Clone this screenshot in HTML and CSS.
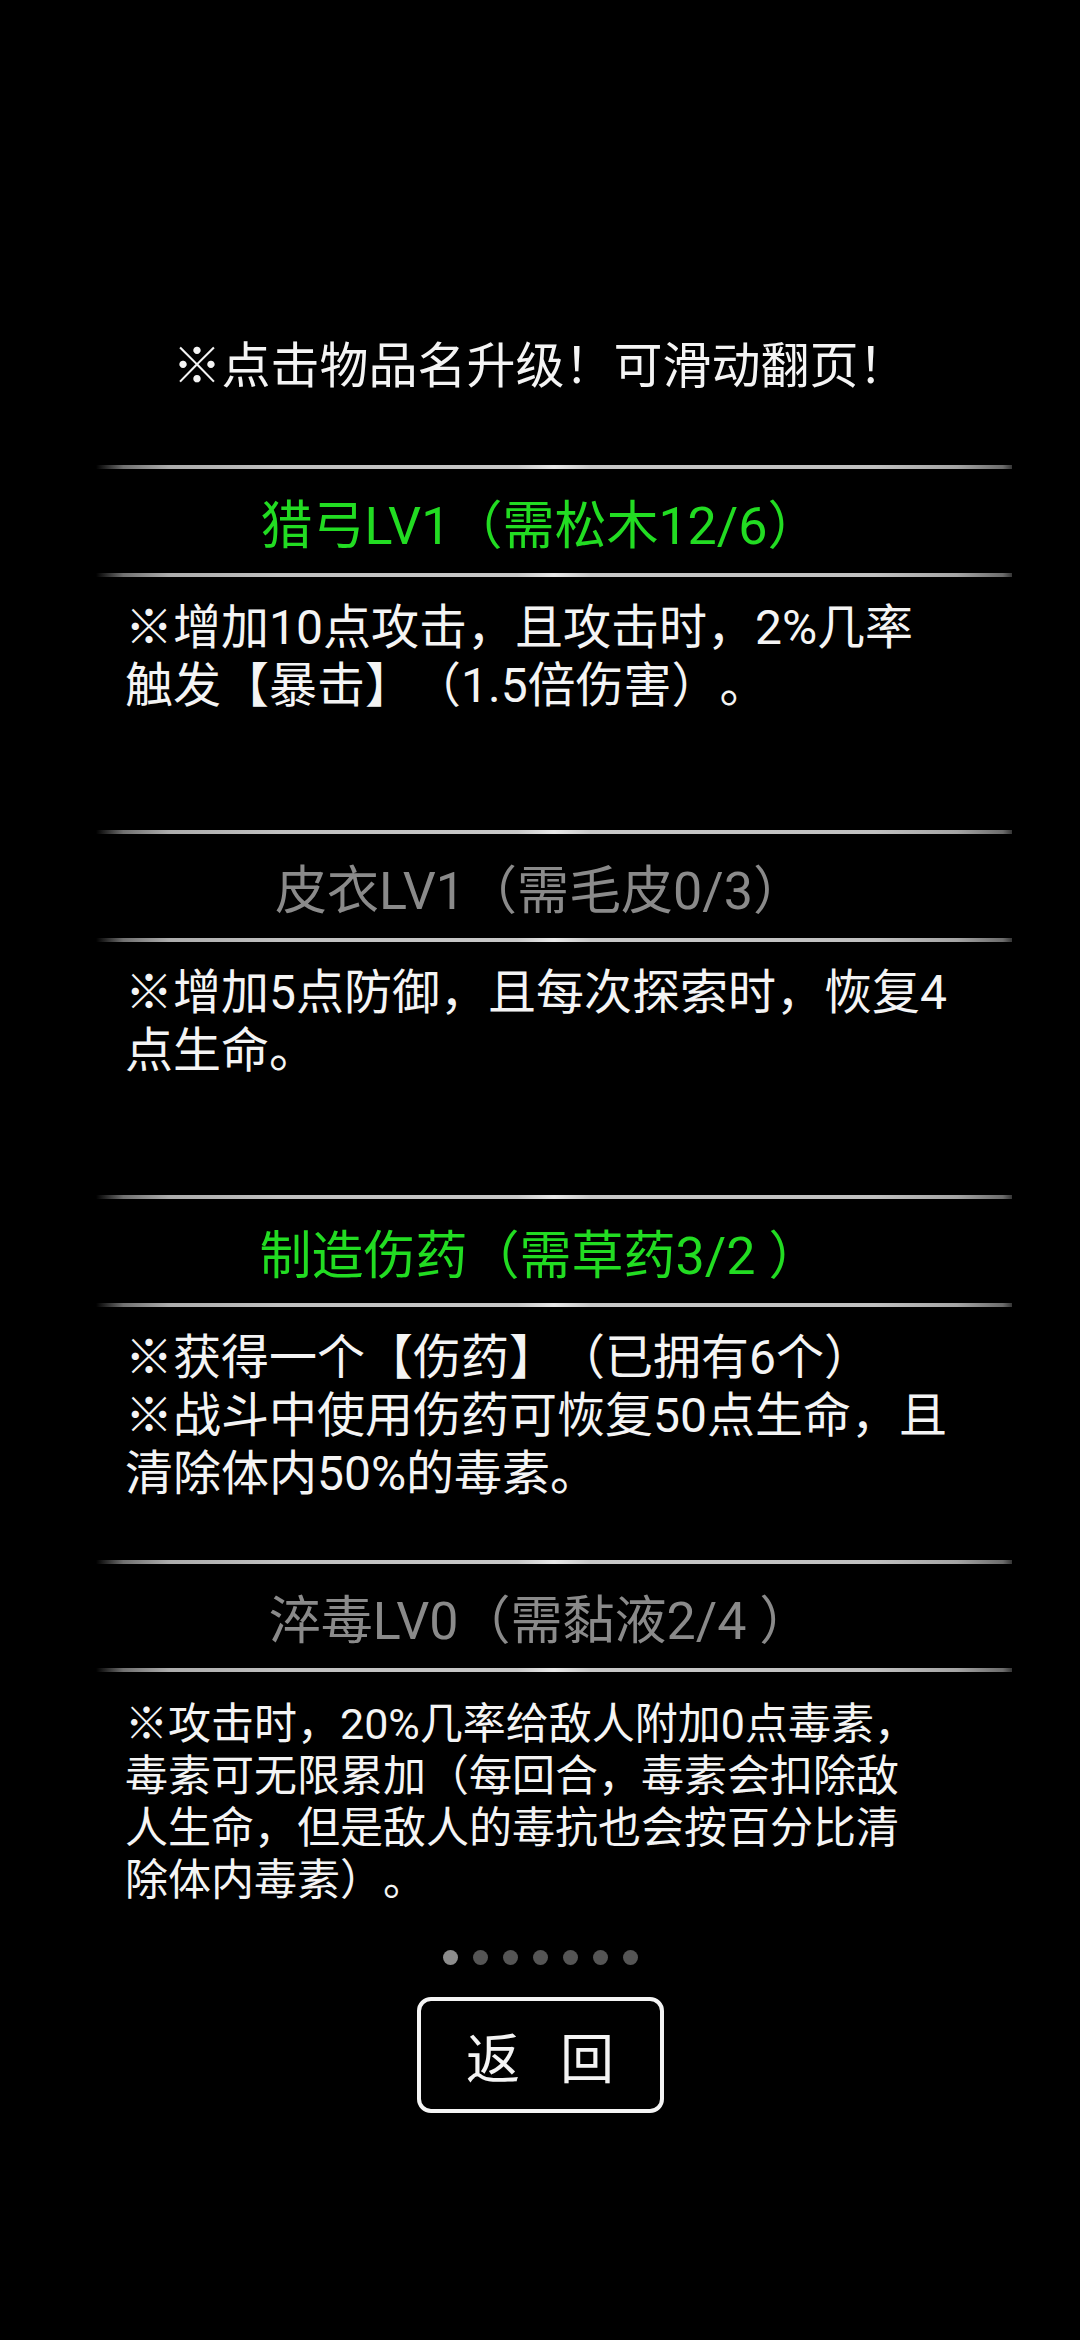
FILE: index.html
```html
<!DOCTYPE html>
<html lang="zh-CN">
<head>
<meta charset="utf-8">
<title>升级</title>
<link rel="stylesheet" href="styles.css">
</head>
<body>
<main class="screen">
  <p class="tip">※点击物品名升级！可滑动翻页！</p>

  <section class="item">
    <div class="divider"></div>
    <h2 class="item-name ok">猎弓LV1（需松木12/6）</h2>
    <div class="divider"></div>
    <p class="item-desc">※增加10点攻击，且攻击时，2%几率<br>触发【暴击】（1.5倍伤害）。</p>
  </section>

  <section class="item">
    <div class="divider"></div>
    <h2 class="item-name lack">皮衣LV1（需毛皮0/3）</h2>
    <div class="divider"></div>
    <p class="item-desc">※增加5点防御，且每次探索时，恢复4<br>点生命。</p>
  </section>

  <section class="item">
    <div class="divider"></div>
    <h2 class="item-name ok">制造伤药（需草药3/2 ）</h2>
    <div class="divider"></div>
    <p class="item-desc">※获得一个【伤药】（已拥有6个）<br>※战斗中使用伤药可恢复50点生命，且<br>清除体内50%的毒素。</p>
  </section>

  <section class="item">
    <div class="divider"></div>
    <h2 class="item-name lack">淬毒LV0（需黏液2/4 ）</h2>
    <div class="divider"></div>
    <p class="item-desc small">※攻击时，20%几率给敌人附加0点毒素，<br>毒素可无限累加（每回合，毒素会扣除敌<br>人生命，但是敌人的毒抗也会按百分比清<br>除体内毒素）。</p>
  </section>

  <div class="pager">
    <span class="dot active"></span>
    <span class="dot"></span>
    <span class="dot"></span>
    <span class="dot"></span>
    <span class="dot"></span>
    <span class="dot"></span>
    <span class="dot"></span>
  </div>

  <button class="back-btn" type="button"><span>返</span><span>回</span></button>
</main>
</body>
</html>
```

FILE: styles.css
```css
html, body {
  margin: 0;
  padding: 0;
  background: #000;
}

body {
  width: 1080px;
  height: 2340px;
  overflow: hidden;
  font-family: Roboto, "Noto Sans CJK SC", "Noto Sans", sans-serif;
  color: #f4f4f4;
  text-spacing-trim: space-all;
}

.screen {
  display: flex;
  flex-direction: column;
  padding-top: 337px;
}

.tip {
  margin: 0 0 68px 0;
  height: 60px;
  line-height: 60px;
  font-size: 49px;
  text-align: center;
  white-space: nowrap;
}

.item {
  display: flex;
  flex-direction: column;
  height: 365px;
}

.divider {
  height: 4px;
  margin-left: 96px;
  width: 916px;
  background: linear-gradient(90deg,
    rgba(120,120,120,0) 0%,
    #707070 3%,
    #acacac 8%,
    #c0c0c0 20%,
    #c8c8c8 46%,
    #e8e8e8 50%,
    #c8c8c8 54%,
    #c0c0c0 85%,
    #a4a4a4 94%,
    #6c6c6c 99%,
    rgba(90,90,90,0.6) 100%);
}

.item-name {
  margin: 0;
  height: 104px;
  display: flex;
  align-items: center;
  justify-content: center;
  font-size: 52px;
  font-weight: 400;
  white-space: nowrap;
}

.item-name.ok {
  color: #22dc22;
}

.item-name.lack {
  color: #8a8a8a;
}

.item-desc {
  margin: 0;
  flex: 1;
  padding: 22px 0 0 125px;
  font-size: 48px;
  line-height: 58px;
  white-space: nowrap;
  color: #f4f4f4;
}

.item-desc.small {
  padding-top: 26px;
  font-size: 43px;
  line-height: 52px;
}

.pager {
  display: flex;
  justify-content: center;
  gap: 15px;
  margin-top: 25px;
}

.dot {
  width: 15px;
  height: 15px;
  border-radius: 50%;
  background: #555;
}

.dot.active {
  background: #8c8c8c;
}

.back-btn {
  align-self: center;
  margin: 32px 0 0 0;
  width: 247px;
  height: 116px;
  box-sizing: border-box;
  border: 4px solid #f4f4f4;
  border-radius: 14px;
  background: #000;
  color: #f4f4f4;
  font-family: "Noto Sans CJK SC", sans-serif;
  font-size: 54px;
  display: flex;
  align-items: center;
  justify-content: center;
  gap: 40px;
  padding: 0;
}
```
